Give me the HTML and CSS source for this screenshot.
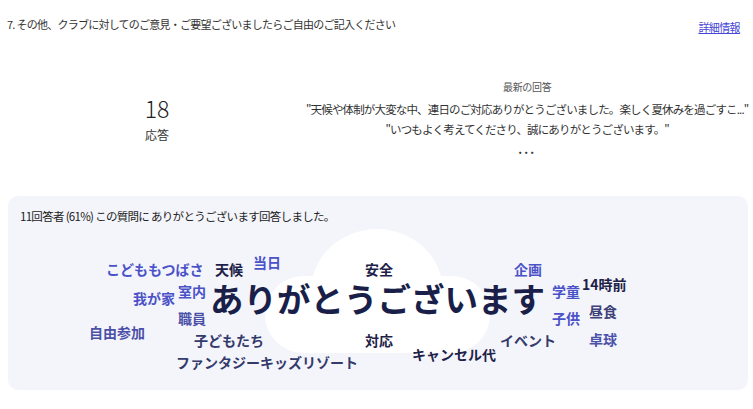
FILE: index.html
```html
<!DOCTYPE html>
<html lang="ja">
  <head>
    <meta charset="UTF-8" />
    <meta name="viewport" content="width=device-width, initial-scale=1.0" />
    <title>回答の概要</title>
    <link rel="stylesheet" href="styles.css">
  </head>
  <body>
    <div class="question">
      <div class="question-head">
        <span class="question-title">7. その他、クラブに対してのご意見・ご要望ございましたらご自由のご記入ください</span>
        <a class="details-link" href="#">詳細情報</a>
      </div>

      <div class="stats">
        <div class="count">
          <div class="count-num">18</div>
          <div class="count-label">応答</div>
        </div>
        <div class="latest">
          <div class="latest-label">最新の回答</div>
          <div class="latest-item first">"天候や体制が大変な中、連日のご対応ありがとうございました。楽しく夏休みを過ごすこ..."</div>
          <div class="latest-item">"いつもよく考えてくださり、誠にありがとうございます。"</div>
          <div class="latest-more">...</div>
        </div>
      </div>

      <div class="card">
        <p class="card-summary">11回答者 (61%) この質問に ありがとうございます回答しました。</p>
        <div class="cloud">
          <svg class="cloud-shape" width="740" height="194" viewBox="0 0 740 194">
            <rect x="257" y="80" width="225" height="77" rx="38" fill="#fff" />
            <ellipse cx="369" cy="95" rx="66" ry="62" fill="#fff" />
          </svg>
          <!-- words: left / top are the word's place on the cloud -->
          <span class="word blue" style="left:98px;top:66px">こどももつばさ</span>
          <span class="word dark" style="left:207px;top:66px">天候</span>
          <span class="word blue" style="left:245px;top:59px">当日</span>
          <span class="word dark" style="left:357px;top:66px">安全</span>
          <span class="word blue" style="left:506px;top:66px">企画</span>
          <span class="word dark" style="left:574px;top:81px">14時前</span>
          <span class="word blue" style="left:544px;top:88px">学童</span>
          <span class="word blue" style="left:125px;top:95px">我が家</span>
          <span class="word blue" style="left:170px;top:88px">室内</span>
          <span class="word big" style="left:202px;top:89px">ありがとうございます</span>
          <span class="word mid" style="left:170px;top:115px">職員</span>
          <span class="word mid" style="left:81px;top:129px">自由参加</span>
          <span class="word slate" style="left:186px;top:137px">子どもたち</span>
          <span class="word dark" style="left:357px;top:137px">対応</span>
          <span class="word slate" style="left:168px;top:159px">ファンタジーキッズリゾート</span>
          <span class="word dark" style="left:404px;top:151px">キャンセル代</span>
          <span class="word slate" style="left:492px;top:137px">イベント</span>
          <span class="word blue" style="left:544px;top:115px">子供</span>
          <span class="word gray" style="left:581px;top:108px">昼食</span>
          <span class="word mid" style="left:581px;top:136px">卓球</span>
        </div>
      </div>
    </div>
  </body>
</html>
```

FILE: styles.css
```css
body {
  margin: 0;
  padding: 0;
  background: #fff;
  font-family: "Noto Sans CJK JP", "Noto Sans", sans-serif;
  color: #333;
}

.question {
  width: 740px;
  padding: 0 5px 0 8px;
}

.question-head {
  display: flex;
  justify-content: space-between;
  align-items: center;
  padding-top: 14px;
  height: 22px;
}

.question-title {
  font-size: 11px;
  letter-spacing: -0.75px;
  margin-left: -1px;
  margin-top: -2px;
  color: #333;
}

.details-link {
  font-size: 11px;
  letter-spacing: -0.6px;
  color: #4646d8;
  text-decoration: underline;
  margin-right: 8px;
  margin-top: 3px;
}

.stats {
  display: grid;
  grid-template-columns: 298px 1fr;
  align-items: start;
  padding-top: 40px;
  height: 120px;
}

.count {
  text-align: center;
  padding-top: 18px;
}

.count-num {
  font-size: 23px;
  line-height: 28px;
  font-weight: 300;
  color: #222;
}

.count-label {
  font-size: 12px;
  line-height: 18px;
  margin-top: 4px;
  color: #333;
}

.latest {
  text-align: center;
  color: #333;
  padding-top: 2px;
}

.latest-label {
  font-size: 10px;
  line-height: 18px;
  color: #555;
  letter-spacing: -0.3px;
}

.latest-item {
  font-size: 11.5px;
  line-height: 20px;
  letter-spacing: -0.85px;
  white-space: nowrap;
}

.latest-item.first {
  margin-top: 3px;
}

.latest-more {
  font-size: 12px;
  line-height: 20px;
  letter-spacing: 2px;
  font-weight: bold;
}

.card {
  position: relative;
  background: #f4f5fb;
  border-radius: 10px;
  height: 194px;
}

.card-summary {
  position: relative;
  z-index: 1;
  margin: 0;
  padding: 12px 0 0 12px;
  font-size: 11.5px;
  letter-spacing: -0.7px;
  color: #222;
}

.cloud {
  position: absolute;
  inset: 0;
}

.cloud-shape {
  position: absolute;
  left: 0;
  top: 0;
}

.word {
  position: absolute;
  font-size: 14px;
  line-height: 1;
  font-weight: bold;
  white-space: nowrap;
}

.word.big {
  font-size: 33.5px;
  line-height: 0.75;
  color: #1a1f4a;
}

.word.dark {
  color: #1e2248;
}

.word.blue {
  color: #4b52c8;
}

.word.mid {
  color: #4c51a8;
}

.word.slate {
  color: #353a6c;
}

.word.gray {
  color: #3d4278;
}
```
